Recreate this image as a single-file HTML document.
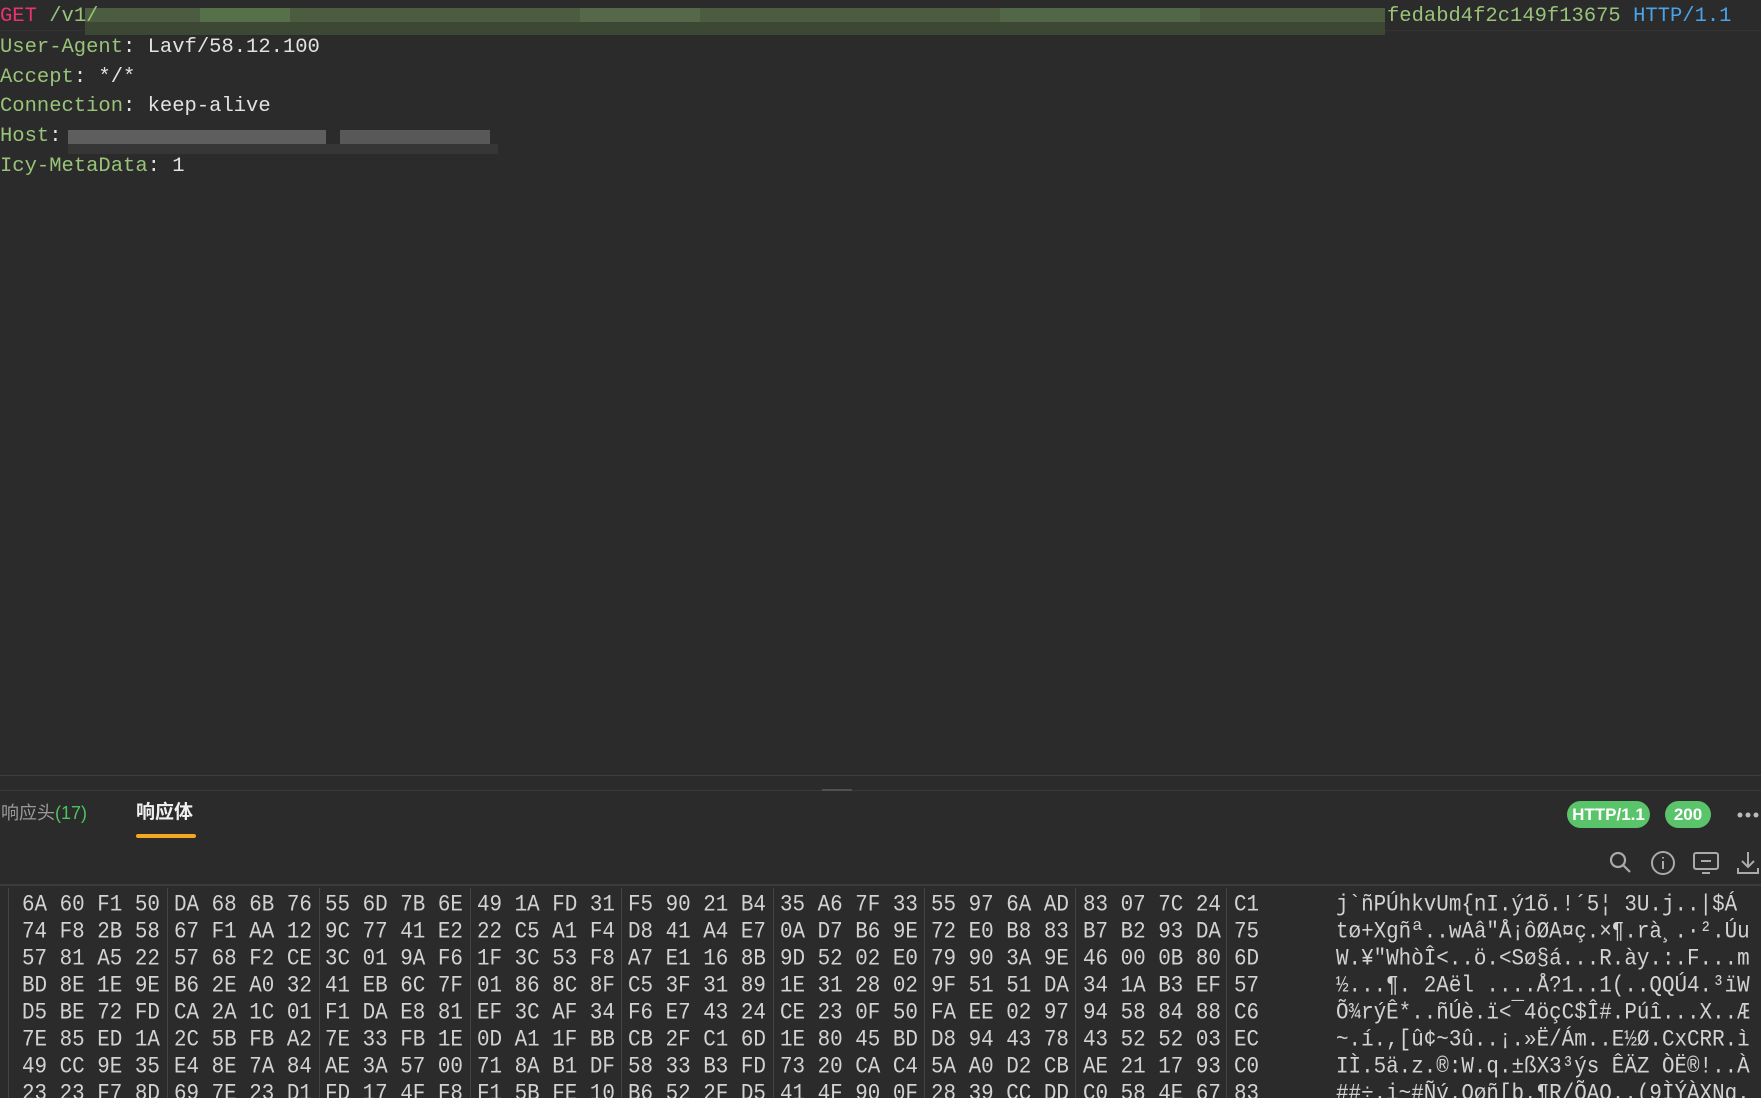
<!DOCTYPE html>
<html><head><meta charset="utf-8"><style>
html,body{margin:0;padding:0;background:#2b2b2b;width:1761px;height:1098px;overflow:hidden;position:relative}
.m{font-family:"Liberation Mono","DejaVu Sans Mono",monospace}
.ln{position:absolute;left:0;height:30px;line-height:30px;font-size:20.5px;white-space:pre;color:#e2e2e2}
.k{color:#98c379}
.blk{position:absolute}
.row{position:absolute;left:0;width:1761px;height:27px;line-height:27px;font-size:20.9px;color:#d2d2d2;white-space:pre}
.row span{position:absolute;top:0;transform:scaleY(1.12);transform-origin:50% 55%}
.vl{position:absolute;top:888px;bottom:0;width:1px;background:#444}
.pill{position:absolute;background:#5ac46b;color:#fff;font-family:"Liberation Sans",sans-serif;font-size:17px;font-weight:bold;border-radius:14px;text-align:center;height:27px;line-height:27px}
</style></head><body>
<!-- top request -->
<div class="blk" style="left:0;top:30px;width:1761px;height:1px;background:#333"></div>
<div class="blk" style="left:85px;top:8px;width:1300px;height:14px;background:#4b5c40"></div>
<div class="blk" style="left:85px;top:22px;width:1300px;height:13px;background:#3c4734"></div>
<div class="blk" style="left:200px;top:8px;width:90px;height:14px;background:#56704a"></div>
<div class="blk" style="left:580px;top:8px;width:120px;height:14px;background:#55694a"></div>
<div class="blk" style="left:1000px;top:8px;width:200px;height:14px;background:#526648"></div>
<div class="ln m" style="top:2px"><span style="color:#e8336d">GET</span> <span class="k">/v1/</span></div>
<div class="ln m" style="top:2px;left:1387px"><span class="k">fedabd4f2c149f13675</span> <span style="color:#4aa3e8">HTTP/1.1</span></div>
<div class="ln m" style="top:33px"><span class="k">User-Agent</span>: Lavf/58.12.100</div>
<div class="ln m" style="top:63px"><span class="k">Accept</span>: */*</div>
<div class="ln m" style="top:92px"><span class="k">Connection</span>: keep-alive</div>
<div class="ln m" style="top:122px"><span class="k">Host</span>: </div>
<div class="blk" style="left:68px;top:130px;width:258px;height:14px;background:#5e5e5e"></div>
<div class="blk" style="left:340px;top:130px;width:150px;height:14px;background:#585858"></div>
<div class="blk" style="left:68px;top:144px;width:430px;height:10px;background:#363636"></div>
<div class="ln m" style="top:152px"><span class="k">Icy-MetaData</span>: 1</div>
<!-- divider -->
<div class="blk" style="left:0;top:775px;width:1761px;height:1px;background:#3d3d3d"></div>
<div class="blk" style="left:0;top:790px;width:1761px;height:1px;background:#3a3a3a"></div>
<div class="blk" style="left:822px;top:789px;width:30px;height:2px;background:#505050"></div>
<!-- tabs -->
<div class="blk" style="left:1px;top:800px;font-family:'Liberation Sans','Noto Sans CJK SC',sans-serif;font-size:18px;color:#9a9a9a;line-height:26px">响应头<span style="color:#4cc45e">(17)</span></div>
<div class="blk" style="left:136px;top:800px;font-family:'Liberation Sans','Noto Sans CJK SC',sans-serif;font-size:19px;font-weight:bold;color:#f0f0f0;line-height:26px">响应体</div>
<div class="blk" style="left:136px;top:834px;width:60px;height:4px;border-radius:2px;background:#f5a623"></div>
<div class="pill" style="left:1567px;top:801px;width:83px">HTTP/1.1</div>
<div class="pill" style="left:1665px;top:801px;width:46px">200</div>
<div class="blk" style="left:1737px;top:812px;font-size:0">
<svg width="22" height="6"><circle cx="3" cy="3" r="2.5" fill="#bbb"/><circle cx="11" cy="3" r="2.5" fill="#bbb"/><circle cx="19" cy="3" r="2.5" fill="#bbb"/></svg></div>
<svg class="blk" style="left:1608px;top:850px" width="26" height="26" fill="none" stroke="#aaa" stroke-width="2.2"><circle cx="10" cy="10" r="7"/><path d="M15 15l7 7"/></svg>
<svg class="blk" style="left:1650px;top:850px" width="26" height="26" fill="none" stroke="#aaa" stroke-width="2"><circle cx="13" cy="13" r="11"/><path d="M13 11v8M13 7v1.5"/></svg>
<svg class="blk" style="left:1692px;top:850px" width="28" height="26" fill="none" stroke="#aaa" stroke-width="2"><rect x="2" y="3" width="24" height="16" rx="2"/><path d="M9 11h10M10 23h8"/></svg>
<svg class="blk" style="left:1736px;top:849px" width="24" height="26" fill="none" stroke="#aaa" stroke-width="2"><path d="M12 3v15M6 12l6 6 6-6M2 19v5h20v-5"/></svg>
<div class="blk" style="left:0;top:884px;width:1761px;height:2px;background:#3c3c3c"></div>
<!-- hex lines -->
<div class="vl" style="left:8px"></div><div class="vl" style="left:167px"></div><div class="vl" style="left:319px"></div><div class="vl" style="left:470px"></div><div class="vl" style="left:621px"></div><div class="vl" style="left:773px"></div><div class="vl" style="left:924px"></div><div class="vl" style="left:1075px"></div><div class="vl" style="left:1226px"></div>
<div class="row m" style="top:892px"><span style="left:22px">6A 60 F1 50</span><span style="left:174px">DA 68 6B 76</span><span style="left:325px">55 6D 7B 6E</span><span style="left:477px">49 1A FD 31</span><span style="left:628px">F5 90 21 B4</span><span style="left:780px">35 A6 7F 33</span><span style="left:931px">55 97 6A AD</span><span style="left:1083px">83 07 7C 24</span><span style="left:1234px">C1</span><span style="left:1336px">j`ñPÚhkvUm{nI.ý1õ.!´5¦ 3U.j..|$Á</span></div>
<div class="row m" style="top:919px"><span style="left:22px">74 F8 2B 58</span><span style="left:174px">67 F1 AA 12</span><span style="left:325px">9C 77 41 E2</span><span style="left:477px">22 C5 A1 F4</span><span style="left:628px">D8 41 A4 E7</span><span style="left:780px">0A D7 B6 9E</span><span style="left:931px">72 E0 B8 83</span><span style="left:1083px">B7 B2 93 DA</span><span style="left:1234px">75</span><span style="left:1336px">tø+Xgñª..wAâ"Å¡ôØA¤ç.×¶.rà¸.·².Úu</span></div>
<div class="row m" style="top:946px"><span style="left:22px">57 81 A5 22</span><span style="left:174px">57 68 F2 CE</span><span style="left:325px">3C 01 9A F6</span><span style="left:477px">1F 3C 53 F8</span><span style="left:628px">A7 E1 16 8B</span><span style="left:780px">9D 52 02 E0</span><span style="left:931px">79 90 3A 9E</span><span style="left:1083px">46 00 0B 80</span><span style="left:1234px">6D</span><span style="left:1336px">W.¥"WhòÎ&lt;..ö.&lt;Sø§á...R.ày.:.F...m</span></div>
<div class="row m" style="top:973px"><span style="left:22px">BD 8E 1E 9E</span><span style="left:174px">B6 2E A0 32</span><span style="left:325px">41 EB 6C 7F</span><span style="left:477px">01 86 8C 8F</span><span style="left:628px">C5 3F 31 89</span><span style="left:780px">1E 31 28 02</span><span style="left:931px">9F 51 51 DA</span><span style="left:1083px">34 1A B3 EF</span><span style="left:1234px">57</span><span style="left:1336px">½...¶. 2Aël ....Å?1..1(..QQÚ4.³ïW</span></div>
<div class="row m" style="top:1000px"><span style="left:22px">D5 BE 72 FD</span><span style="left:174px">CA 2A 1C 01</span><span style="left:325px">F1 DA E8 81</span><span style="left:477px">EF 3C AF 34</span><span style="left:628px">F6 E7 43 24</span><span style="left:780px">CE 23 0F 50</span><span style="left:931px">FA EE 02 97</span><span style="left:1083px">94 58 84 88</span><span style="left:1234px">C6</span><span style="left:1336px">Õ¾rýÊ*..ñÚè.ï&lt;¯4öçC$Î#.Púî...X..Æ</span></div>
<div class="row m" style="top:1027px"><span style="left:22px">7E 85 ED 1A</span><span style="left:174px">2C 5B FB A2</span><span style="left:325px">7E 33 FB 1E</span><span style="left:477px">0D A1 1F BB</span><span style="left:628px">CB 2F C1 6D</span><span style="left:780px">1E 80 45 BD</span><span style="left:931px">D8 94 43 78</span><span style="left:1083px">43 52 52 03</span><span style="left:1234px">EC</span><span style="left:1336px">~.í.,[û¢~3û..¡.»Ë/Ám..E½Ø.CxCRR.ì</span></div>
<div class="row m" style="top:1054px"><span style="left:22px">49 CC 9E 35</span><span style="left:174px">E4 8E 7A 84</span><span style="left:325px">AE 3A 57 00</span><span style="left:477px">71 8A B1 DF</span><span style="left:628px">58 33 B3 FD</span><span style="left:780px">73 20 CA C4</span><span style="left:931px">5A A0 D2 CB</span><span style="left:1083px">AE 21 17 93</span><span style="left:1234px">C0</span><span style="left:1336px">IÌ.5ä.z.®:W.q.±ßX3³ýs ÊÄZ ÒË®!..À</span></div>
<div class="row m" style="top:1081px"><span style="left:22px">23 23 F7 8D</span><span style="left:174px">69 7E 23 D1</span><span style="left:325px">FD 17 4F F8</span><span style="left:477px">F1 5B FE 10</span><span style="left:628px">B6 52 2F D5</span><span style="left:780px">41 4F 90 0F</span><span style="left:931px">28 39 CC DD</span><span style="left:1083px">C0 58 4E 67</span><span style="left:1234px">83</span><span style="left:1336px">##÷.i~#Ñý.Oøñ[þ.¶R/ÕAO..(9ÌÝÀXNg.</span></div>
</body></html>
